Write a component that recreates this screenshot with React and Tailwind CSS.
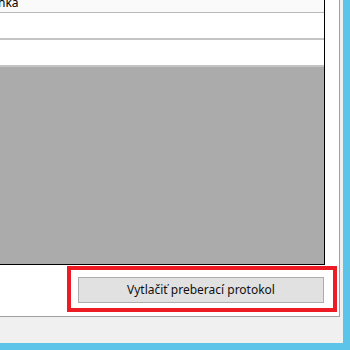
export default function App() {
    return (
        <div
            className="relative w-[350px] h-[350px] overflow-hidden bg-[#5cc3e9]"
            style={{ fontFamily: '"Noto Sans", "Open Sans", Arial, sans-serif' }}
        >
            <div className="w-[343px] h-[343px] bg-[#f0f0f0]">
                <div className="flex flex-col w-[340px] h-[317px] bg-white border-r border-b border-[#a0a0a0]">
                    {/* grid */}
                    <div className="flex flex-col w-[325px] h-[265px] border-r border-b border-black">
                        <div className="h-[13px] shrink-0 bg-[#fafafa] border-b border-[#b9b9b9] overflow-hidden">
                            <div className="-ml-[2px] -mt-[5px] text-[12px] leading-[16px] text-black">
                                nka
                            </div>
                        </div>
                        <div className="h-[27px] shrink-0 bg-white border-b-2 border-[#c4c4c4]"></div>
                        <div className="h-[27px] shrink-0 bg-white border-b-2 border-[#c4c4c4]"></div>
                        <div className="flex-1 bg-[#ababab]"></div>
                    </div>
                    {/* button row */}
                    <div className="flex justify-end pt-[12px] pr-[15px]">
                        <button className="w-[246px] h-[26px] bg-[#e1e1e1] border border-[#adadad] text-[12px] text-[#111] leading-none">
                            Vytlačiť preberací protokol
                        </button>
                    </div>
                </div>
            </div>
            <div className="absolute left-[67px] top-[266px] w-[270px] h-[46px] border-[4px] border-[#ed1c24]"></div>
        </div>
    );
}
